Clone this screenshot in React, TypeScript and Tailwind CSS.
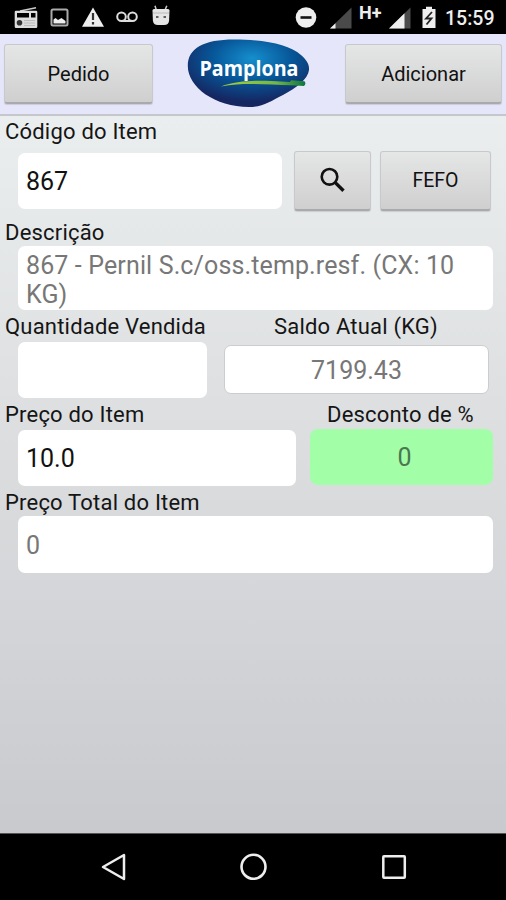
import type { ReactNode } from "react";

const raised =
  "flex shrink-0 items-center justify-center rounded-[3px] border border-[#c8c9cc] border-b-2 border-b-[#a8aaad] bg-linear-to-b from-[#e5e6e6] to-[#cfcfcf] text-[#111] shadow-[0_1px_1px_rgba(0,0,0,0.12)]";

const field = "flex items-center rounded-[7px] bg-white px-2 pt-[2px] text-[25px]";

function Label({ children, className = "" }: { children: ReactNode; className?: string }) {
  return <span className={`block whitespace-nowrap text-[22px] leading-[26px] tracking-[0.2px] text-[#151515] ${className}`}>{children}</span>;
}

function StatusBar() {
  return (
    <div className="flex h-[34px] shrink-0 items-start bg-black text-[#eee]">
      <svg className="ml-[14px] mt-[7px] shrink-0" width="24" height="22" viewBox="0 0 24 22">
        <path d="M6 4 22 .8" stroke="#ccc" strokeWidth="1.4" />
        <path fillRule="evenodd" fill="#ddd" d="M2 3.8h20q1.3 0 1.3 1.3v14.7q0 1.300-1.300 1.300H2Q.7 21.100.7 19.800V5.100Q.7 3.800 2 3.800ZM3 6v4.500h12V6ZM17 6v4.500h4.500V6Z" />
        <circle cx="5.500" cy="15.800" r="2.800" fill="#333" />
        <path d="M10 13.500h11M10 16h11M10 18.500h11" stroke="#bbb" />
      </svg>
      <svg className="ml-[12px] mt-[8px] shrink-0" width="19" height="19" viewBox="0 0 19 19">
        <rect x="1.500" y="1.500" width="16" height="16" rx="1.500" fill="none" stroke="#aaa" strokeWidth="2" />
        <path d="M3.500 15.500v-4l2-1.500 2.500 2 3.500-2 4 3v2.500Z" fill="#eee" />
      </svg>
      <svg className="ml-[13px] mt-[7px] shrink-0" width="22" height="20" viewBox="0 0 22 20">
        <path d="M11 .5 22 19.800H0Z" fill="#eee" />
        <path d="M11 6v7M11 15v2.500" stroke="#333" strokeWidth="2.200" />
      </svg>
      <svg className="ml-[12px] mt-[11px] shrink-0" width="23" height="12" viewBox="0 0 23 12">
        <g fill="none" stroke="#ddd" strokeWidth="2">
          <circle cx="5.500" cy="5.700" r="4.300" />
          <circle cx="16.500" cy="5.700" r="4.300" />
          <path d="M5.500 10h11" />
        </g>
      </svg>
      <svg className="ml-[12px] mt-[5px] shrink-0" width="20" height="21" viewBox="0 0 20 21">
        <path d="M5.300 5 4 .8M14 5l1.800-4.200" stroke="#ccc" strokeWidth="1.500" />
        <path d="M1.500 5.500Q1.500 4 3 4h14q1.500 0 1.500 1.500l-.4 10q-.4 4.500-5 4.500H6.900q-4.600 0-5-4.500Z" fill="#e5e5e5" />
        <path d="M2 8h16" stroke="#bbb" />
        <path d="M5 12h2.500M12.500 12H15" stroke="#333" strokeWidth="1.600" />
      </svg>
      <svg className="ml-[124px] mt-[7px] shrink-0" width="22" height="21" viewBox="0 0 22 21">
        <circle cx="11" cy="10.500" r="10.300" fill="#eee" />
        <path d="M5.500 10.500h11" stroke="#111" strokeWidth="2.600" />
      </svg>
      <svg className="ml-[13px] mt-[7px] shrink-0" width="22" height="22" viewBox="0 0 22 22">
        <path d="M21.500.5v21H0Z" fill="#4a4a4a" />
        <path d="M5.500 16.200v5.300H0Z" fill="#eee" />
      </svg>
      <span className="ml-[7px] mt-[3px] w-[24px] whitespace-nowrap font-bold text-[18px] leading-[20px]">H+</span>
      <svg className="ml-[6px] mt-[7px] shrink-0" width="22" height="22" viewBox="0 0 22 22">
        <path d="M21.500.5v21H0Z" fill="#4a4a4a" />
        <path d="M15.500 6.300v15.200H0Z" fill="#eee" />
      </svg>
      <svg className="ml-[10px] mt-[6px] shrink-0" width="16" height="23" viewBox="0 0 16 23">
        <path d="M1.500 3H5V.8h6V3h3.500v19h-13Z" fill="#eee" />
        <path d="M11 6 5 12.500h5.500L5.500 18.500" fill="none" stroke="#222" strokeWidth="1.800" />
      </svg>
      <span className="ml-[8px] mt-[7px] whitespace-nowrap text-[19.5px] font-medium leading-[23px]">15:59</span>
    </div>
  );
}

function Logo() {
  return (
    <svg className="mt-[4px] shrink-0" width="124" height="70" viewBox="0 0 124 70">
      <defs>
        <radialGradient id="blue" cx=".53" cy=".28" r=".65">
          <stop offset="0" stopColor="#168fce" />
          <stop offset=".5" stopColor="#075799" />
          <stop offset="1" stopColor="#152661" />
        </radialGradient>
        <linearGradient id="leaf">
          <stop offset="0" stopColor="#a4cf3a" />
          <stop offset=".65" stopColor="#75b743" />
          <stop offset="1" stopColor="#0c7540" />
        </linearGradient>
      </defs>
      <path d="M.8 28C.8 10 17 1.500 47 1.500c31 0 55 5 67 15.500 6 5 8.500 10 8 15-.8 9-13 18-26 25-13 6.500-20 12-34 12C28 69 .8 49 .8 28Z" fill="url(#blue)" />
      <path d="M34 48.500C52 41 79 42.500 94 43.500l9 .6 1-1.800 13.500 1q2 2.500-.5 4.700l-13.500-.7c-22-.5-46-3.300-69.500 1.200Z" fill="url(#leaf)" />
      <text x="12.500" y="37.500" textLength="99" lengthAdjust="spacingAndGlyphs" fill="white" fontFamily="Open Sans, sans-serif" fontSize="21" fontWeight="700">Pamplona</text>
    </svg>
  );
}

export default function App() {
  return (
    <div className="flex h-[900px] w-[506px] flex-col overflow-hidden bg-black font-[Roboto,sans-serif]">
      <StatusBar />
      <header className="flex h-[82px] shrink-0 items-start border-b-2 border-[#c6c7cc] bg-[#e6e6fa] pl-[4px]">
        <button className={`${raised} mt-[10px] h-[60px] w-[149px] text-[20px]`}>Pedido</button>
        <div className="ml-[34px]"><Logo /></div>
        <button className={`${raised} ml-[34px] mt-[10px] h-[60px] w-[157px] text-[20px]`}>Adicionar</button>
      </header>
      <main className="flex min-h-0 flex-1 flex-col bg-linear-to-b from-[#ebeeee] to-[#c9cace] pl-[5px]">
        <Label className="mt-[3px]">Código do Item</Label>
        <div className="ml-[13px] mt-[6px] flex h-[60px]">
          <div className={`${field} mt-[2px] h-[56px] w-[264px] text-[#111]`}>867</div>
          <button className={`${raised} ml-[12px] h-[60px] w-[77px]`}>
            <svg width="26" height="26" viewBox="0 0 26 26" fill="none" stroke="#111" className="-mt-[2px]">
              <circle cx="9.500" cy="9.800" r="7.800" strokeWidth="2.600" />
              <path d="m15.300 15.600 8.200 8.200" strokeWidth="3.400" />
            </svg>
          </button>
          <button className={`${raised} ml-[9px] h-[60px] w-[111px] text-[19.5px]`}>FEFO</button>
        </div>
        <Label className="mt-[9px]">Descrição</Label>
        <div className="ml-[13px] h-[64px] w-[475px] rounded-[7px] bg-white px-2 pt-[5px] text-[25px] leading-[29px] tracking-[0.13px] text-[#777]">
          867 - Pernil S.c/oss.temp.resf. (CX: 10<br />KG)
        </div>
        <div className="mt-[4px] flex">
          <Label className="w-[269px]">Quantidade Vendida</Label>
          <Label>Saldo Atual (KG)</Label>
        </div>
        <div className="ml-[13px] mt-[2px] flex h-[56px]">
          <div className={`${field} w-[189px]`} />
          <div className={`${field} ml-[17px] mt-[3px] h-[49px] w-[265px] justify-center rounded-[5px] border border-[#cccdd0] text-[#777]`}>7199.43</div>
        </div>
        <div className="mt-[4px] flex">
          <Label className="w-[322px]">Preço do Item</Label>
          <Label>Desconto de %</Label>
        </div>
        <div className="ml-[13px] mt-px flex h-[57px]">
          <div className={`${field} mt-px h-[56px] w-[278px] text-[#111]`}>10.0</div>
          <div className="ml-[14px] flex h-[56px] w-[183px] items-center justify-center rounded-[8px] bg-[#a2ffa8] pl-[6px] pt-[2px] text-[25px] text-[#4c7750]">0</div>
        </div>
        <Label className="mt-[4px]">Preço Total do Item</Label>
        <div className={`${field} ml-[13px] h-[57px] w-[475px] text-[#777]`}>0</div>
      </main>
      <nav className="flex h-[67px] shrink-0 border-t border-[#555] bg-black">
        <svg className="ml-[100px] mt-[19px] shrink-0" width="26" height="28" viewBox="0 0 26 28">
          <path d="M24 2v24L3 14Z" fill="none" stroke="#eee" strokeWidth="2.500" strokeLinejoin="round" />
        </svg>
        <svg className="ml-[113px] mt-[19px] shrink-0" width="29" height="28" viewBox="0 0 29 28">
          <circle cx="14.500" cy="13.800" r="12" fill="none" stroke="#eee" strokeWidth="2.600" />
        </svg>
        <svg className="ml-[113px] mt-[20px] shrink-0" width="26" height="26" viewBox="0 0 26 26">
          <rect x="2.300" y="2.300" width="21.500" height="21.500" rx=".7" fill="none" stroke="#eee" strokeWidth="2.500" />
        </svg>
      </nav>
    </div>
  );
}
